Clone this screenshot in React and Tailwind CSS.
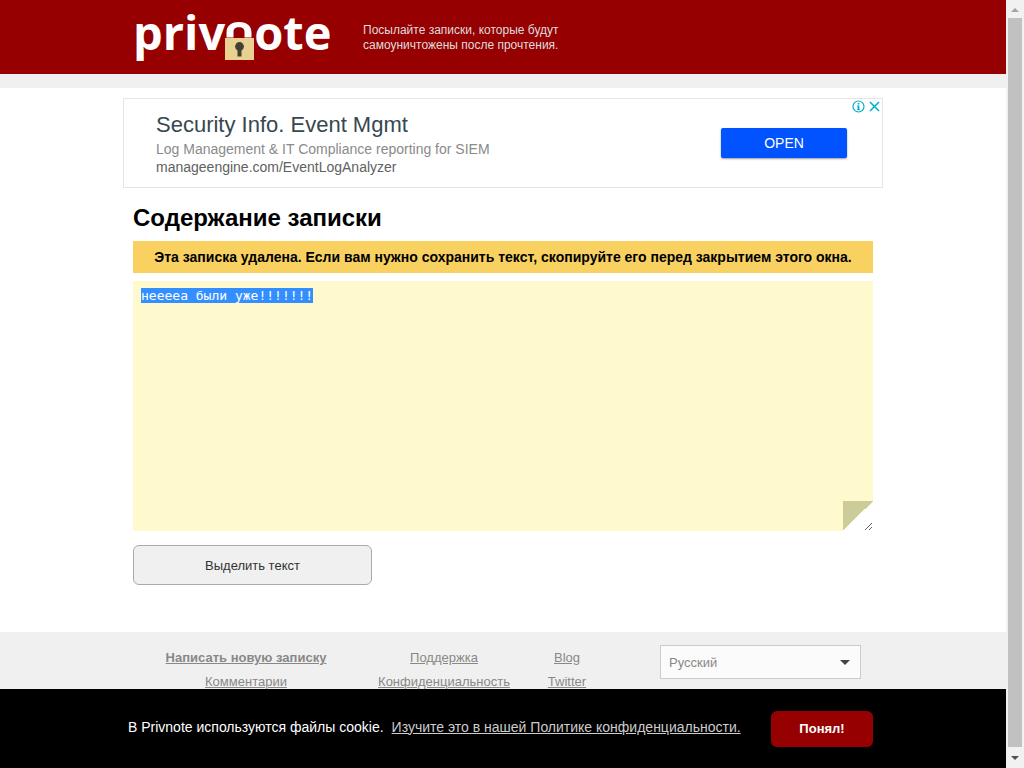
import React, { useEffect, useRef } from "react";

const footerLinks = [
  {
    width: "w-[226px]",
    links: [
      { label: "Написать новую записку", bold: true },
      { label: "Комментарии" },
    ],
  },
  {
    width: "w-[170px]",
    links: [{ label: "Поддержка" }, { label: "Конфиденциальность" }],
  },
  {
    width: "w-[76px]",
    links: [{ label: "Blog" }, { label: "Twitter" }],
  },
];

const Logo = () => (
  <a
    href="#"
    aria-label="Privnote"
    className="flex h-[74px] w-[198px] items-start font-['Open_Sans',sans-serif] text-[47px] leading-[64px] font-bold text-white"
  >
    <span>priv</span>
    <svg
      className="mt-[22px] h-[38px] w-[29px] shrink-0"
      viewBox="0 0 29 38"
      aria-hidden="true"
    >
      <path
        d="M1.500 15.500V11C1.500 4 5.500 0 14 0S26.500 4 26.500 11V15.500H19.500V10C19.500 7 18 5.300 14 5.300S8.500 7 8.500 10V15.500Z"
        fill="#fff"
      />
      <rect y="16" width="29" height="22" fill="#e8d191" />
      <circle cx="14.500" cy="24.500" r="4.400" fill="#443f33" />
      <path d="M12.500 26h4v8.500h-4z" fill="#443f33" />
    </svg>
    <span>ote</span>
  </a>
);

const Header = () => (
  <header className="border-b-[14px] border-[#f0f0f0] bg-[#960000]">
    <div className="mx-auto flex h-[74px] max-w-[740px] items-center gap-8">
      <Logo />
      <p className="w-[220px] pt-0.5 text-xs leading-[15px] text-[#ddd]">
        Посылайте записки, которые будут самоуничтожены после прочтения.
      </p>
    </div>
  </header>
);

const AdBanner = () => (
  <aside className="relative mx-auto mt-[10px] flex h-[90px] max-w-[760px] items-center justify-between border border-[#e5e5e5] pr-[35px] pl-8">
    <div className="text-sm leading-[18px]">
      <p className="text-[22px] leading-[30px] text-[#37474f]">
        Security Info. Event Mgmt
      </p>
      <p className="text-[#8a8a8a]">
        Log Management &amp; IT Compliance reporting for SIEM
      </p>
      <p className="text-[#616161]">manageengine.com/EventLogAnalyzer</p>
    </div>
    <button className="h-[30px] w-[126px] rounded-xs bg-[#0053ff] text-sm text-white shadow-[0_1px_2px_rgba(0,0,0,0.4)]">
      OPEN
    </button>
    <svg
      className="absolute top-0 right-0 h-[14px] w-[30px]"
      viewBox="0 0 30 14"
      fill="none"
      stroke="#00aecd"
      aria-hidden="true"
    >
      <circle cx="6.500" cy="7.500" r="5.500" strokeWidth="1.200" />
      <path d="M6.500 4v1.500M6.500 6.500v4.500" strokeWidth="1.800" />
      <path d="M5.300 7h1.200M5 10.700h3" strokeWidth="0.800" />
      <path d="M18 3l9 9M27 3l-9 9" strokeWidth="1.500" />
    </svg>
  </aside>
);

const Note = () => {
  const noteRef = useRef(null);

  const selectText = () => {
    noteRef.current.focus();
    noteRef.current.select();
  };

  useEffect(() => {
    selectText();
  }, []);

  return (
    <main className="mx-auto max-w-[740px]">
      <h1 className="mt-[14px] text-2xl leading-8 font-bold">
        Содержание записки
      </h1>
      <p className="mt-[7px] bg-[#f9d160] text-center text-sm leading-8 font-bold whitespace-nowrap">
        Эта записка удалена. Если вам нужно сохранить текст, скопируйте его
        перед закрытием этого окна.
      </p>
      <textarea
        ref={noteRef}
        aria-label="Содержание записки"
        readOnly
        defaultValue="нееееа были уже!!!!!!!"
        className="mt-2 block h-[250px] w-full bg-[#fff9ce] bg-[linear-gradient(135deg,#cc9_50%,#fff_50%)] bg-[length:30px_30px] bg-right-bottom bg-no-repeat p-2 font-['DejaVu_Sans_Mono',monospace] text-[13px] leading-[14px] outline-none selection:bg-[#338fff] selection:text-white"
      />
      <button
        onClick={selectText}
        className="mt-[14px] h-10 w-[239px] rounded-md border border-[#aaa] bg-[#f0f0f0] pt-0.5 text-[13px] text-[#333]"
      >
        Выделить текст
      </button>
    </main>
  );
};

const Footer = () => (
  <footer className="mt-[47px] bg-[#f0f0f0] pb-6">
    <div className="mx-auto flex max-w-[740px] pt-[13px]">
      {footerLinks.map((column, i) => (
        <ul
          key={i}
          className={`${column.width} pt-px text-center text-[13px] leading-6 text-[#888]`}
        >
          {column.links.map((link) => (
            <li key={link.label}>
              <a
                href="#"
                className={`underline ${link.bold ? "font-bold" : ""}`}
              >
                {link.label}
              </a>
            </li>
          ))}
        </ul>
      ))}
      <div className="relative ml-auto mr-3 h-[34px] w-[201px]">
        <select
          aria-label="Язык"
          className="h-full w-full appearance-none border border-[#ccc] bg-[#fbfbfb] px-2 pt-0.5 text-[13px] text-[#888]"
        >
          <option>Русский</option>
          <option>English</option>
        </select>
        <svg
          className="pointer-events-none absolute top-[15px] right-[11px] h-[5px] w-[10px]"
          viewBox="0 0 10 5"
          aria-hidden="true"
        >
          <path d="M0 0h10L5 5z" fill="#444" />
        </svg>
      </div>
    </div>
  </footer>
);

const CookieBar = () => (
  <div className="h-[79px] shrink-0 bg-black text-sm text-white">
    <div className="mx-auto flex h-full max-w-[750px] items-center justify-between pr-[5px]">
      <p className="pb-1">
        В Privnote используются файлы cookie.
        <a href="#" className="ml-2 text-[#ccc] underline">
          Изучите это в нашей Политике конфиденциальности.
        </a>
      </p>
      <button className="h-9 w-[102px] rounded-md bg-[#960000] pt-0.5 text-[13px] font-bold">
        Понял!
      </button>
    </div>
  </div>
);

const Scrollbar = () => (
  <div
    className="flex w-[18px] flex-col items-center bg-[#f1f1f1]"
    aria-hidden="true"
  >
    <svg className="h-[18px] w-[14px]" viewBox="0 0 14 18">
      <path d="M3 12h8L7 8z" fill="#a3a3a3" />
    </svg>
    <div className="w-[14px] flex-1 bg-[#c1c1c1]" />
    <svg className="h-[21px] w-[14px]" viewBox="0 0 14 21">
      <path d="M3 9h8l-4 4z" fill="#505050" />
    </svg>
  </div>
);

const App = () => {
  return (
    <div className="flex h-screen bg-white font-['Liberation_Sans',Arial,sans-serif] text-black">
      <div className="flex min-w-0 flex-1 flex-col">
        <div className="min-h-0 flex-1 overflow-hidden">
          <Header />
          <AdBanner />
          <Note />
          <Footer />
        </div>
        <CookieBar />
      </div>
      <Scrollbar />
    </div>
  );
};

export default App;
